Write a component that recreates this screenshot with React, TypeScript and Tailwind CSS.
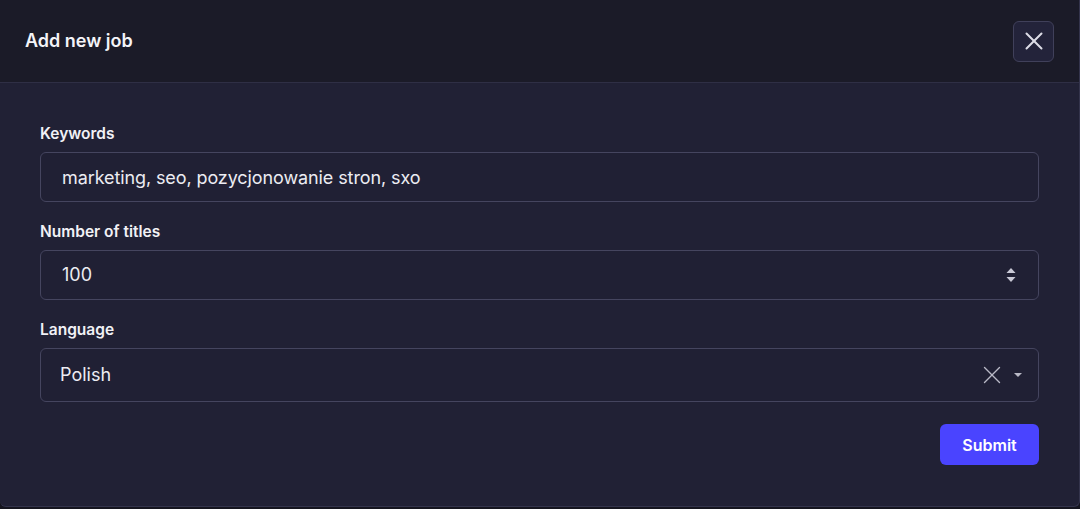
import { X } from "lucide-react";

function Field({ label, children }: { label: string; children: React.ReactNode }) {
  return (
    <div className="flex flex-col gap-2">
      <label className="text-[15.5px] font-semibold leading-5 text-[#f1f1f6]">{label}</label>
      {children}
    </div>
  );
}

function Spinner() {
  return (
    <svg width="10" height="16" viewBox="0 0 10 16" className="text-[#c9c9d6]">
      <path d="M5 1 L9.5 6 H0.5 Z" fill="currentColor" />
      <path d="M5 15 L9.5 10 H0.5 Z" fill="currentColor" />
    </svg>
  );
}

export default function App() {
  return (
    <div className="h-[509px] w-[1080px] bg-[#15151f] font-['Inter',sans-serif]">
      <div className="flex h-[507px] flex-col overflow-hidden rounded-b-md border-r border-b border-[#34344c] bg-[#212135]">
        <div className="flex h-[83px] items-center justify-between border-b border-[#2f2f45] bg-[#1b1b28] pl-[25px] pr-[25px]">
          <h2 className="text-lg font-semibold text-[#f4f4f8]">Add new job</h2>
          <button
            type="button"
            aria-label="Close"
            className="flex size-[41px] items-center justify-center rounded-md border border-[#40405a] bg-[#23233a] text-[#dcdce6]"
          >
            <X className="size-[30px]" strokeWidth={1.6} />
          </button>
        </div>
        <form className="flex flex-col gap-5 px-10 pt-[41px]">
          <Field label="Keywords">
            <input
              readOnly
              value="marketing, seo, pozycjonowanie stron, sxo"
              className="h-[50px] rounded-md border border-[#45455f] bg-[#202034] px-[21px] text-lg tracking-[-0.1px] text-[#ececf2] outline-none"
            />
          </Field>
          <Field label="Number of titles">
            <div className="flex h-[50px] items-center justify-between rounded-md border border-[#45455f] bg-[#202034] pl-[21px] pr-[22px]">
              <span className="text-lg text-[#ececf2]">100</span>
              <Spinner />
            </div>
          </Field>
          <Field label="Language">
            <div className="flex h-[54px] items-center justify-between rounded-md border border-[#45455f] bg-[#202034] pl-[19px] pr-[15px]">
              <span className="text-lg text-[#ececf2]">Polish</span>
              <div className="flex items-center gap-[6px] text-[#b9b9c6]">
                <X className="size-[30px]" strokeWidth={1.1} />
                <svg width="10" height="6" viewBox="0 0 10 6">
                  <path d="M1 1 H9 L5 5 Z" fill="currentColor" />
                </svg>
              </div>
            </div>
          </Field>
          <div className="flex justify-end pt-[2px]">
            <button
              type="button"
              className="h-[41px] w-[99px] rounded-md bg-[#4a44ff] text-base font-semibold text-white"
            >
              Submit
            </button>
          </div>
        </form>
      </div>
    </div>
  );
}
